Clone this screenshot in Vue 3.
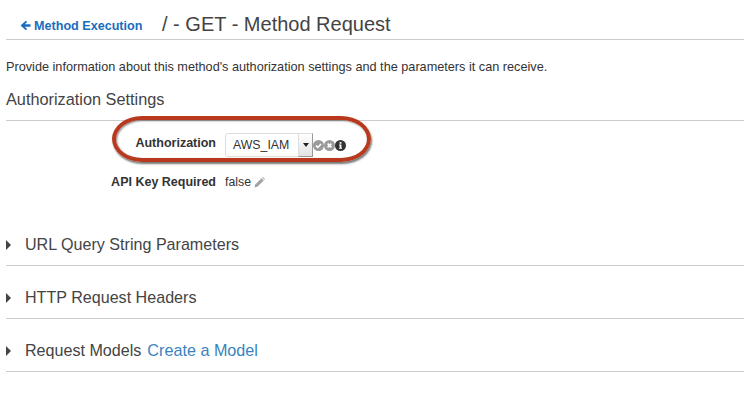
<template>
  <div class="page">
    <header class="head">
      <a class="back">
        <svg class="back-icon" viewBox="0 0 12 12" width="11" height="11">
          <path d="M6.4.8 7.8 2.2 5.2 4.6H11.5V7.4H5.2L7.8 9.8 6.4 11.2.6 6z" fill="#1a6dbd" />
        </svg>
        Method Execution
      </a>
      <h1>/ - GET - Method Request</h1>
    </header>

    <p class="intro">Provide information about this method's authorization settings and the parameters it can receive.</p>

    <h2 class="section-title">Authorization Settings</h2>

    <div class="settings">
      <div class="row auth-row">
        <span class="label auth-label">Authorization</span>
        <div class="select">
          <span class="select-value">AWS_IAM</span>
          <span class="select-arrow"></span>
        </div>
        <div class="actions">
          <svg viewBox="0 0 11 11" width="11" height="11">
            <circle cx="5.5" cy="5.5" r="5.5" fill="#9a9a9a" />
            <path d="M3 5.6 4.8 7.4 8 3.9" fill="none" stroke="#fff" stroke-width="1.5" />
          </svg>
          <svg viewBox="0 0 11 11" width="11" height="11">
            <circle cx="5.5" cy="5.5" r="5.5" fill="#9a9a9a" />
            <path d="M3.6 3.6 7.4 7.4M7.4 3.6 3.6 7.4" fill="none" stroke="#fff" stroke-width="1.6" />
          </svg>
          <svg viewBox="0 0 11 11" width="11" height="11">
            <circle cx="5.5" cy="5.5" r="5.5" fill="#333" />
            <path d="M4.6 2h1.8v1.7H4.6zM4 4.6h2.4v3.2H7v1H4v-1h.7V5.6H4z" fill="#fff" />
          </svg>
        </div>
        <div class="highlight"></div>
      </div>
      <div class="row key-row">
        <span class="label">API Key Required</span>
        <span class="value">false</span>
        <svg class="pencil" viewBox="0 0 11 11" width="11" height="11">
          <path d="M0.5 10.5 1.2 7.6 7.6 1.2 9.8 3.4 3.4 9.8z" fill="#a3a3a3" />
          <path d="M8.2 0.6 9 0 11 2 10.4 2.8z" fill="#a3a3a3" />
        </svg>
      </div>
    </div>

    <section v-for="item in sections" :key="item.title" class="section">
      <span class="caret"></span>
      <span class="section-name">{{ item.title }}</span>
      <a v-if="item.link" class="link">{{ item.link }}</a>
    </section>
  </div>
</template>

<script setup>
const sections = [
  { title: "URL Query String Parameters" },
  { title: "HTTP Request Headers" },
  { title: "Request Models", link: "Create a Model" },
];
</script>

<style scoped>
.page {
  width: 744px;
  height: 402px;
  overflow: hidden;
  padding-left: 6px;
  box-sizing: border-box;
  background: #fff;
  font-family: "Liberation Sans", Arial, sans-serif;
  color: #444;
}

.head {
  display: flex;
  align-items: baseline;
  height: 40px;
  padding: 13px 0 0 14px;
  box-sizing: border-box;
  border-bottom: 1px solid #ccc;
}

.back {
  display: flex;
  align-items: center;
  gap: 3px;
  width: 142px;
  font-size: 12.6px;
  font-weight: 700;
  color: #1a6dbd;
}

.back-icon {
  flex: none;
}

h1 {
  margin: 0;
  font-size: 20px;
  font-weight: 400;
  line-height: 22px;
  color: #444;
}

.intro {
  margin: 20px 0 0;
  font-size: 12.7px;
  line-height: 14px;
  color: #333;
}

.section-title {
  margin: 16px 0 0;
  height: 30px;
  font-size: 16.3px;
  font-weight: 400;
  line-height: 19px;
  border-bottom: 1px solid #ccc;
  color: #444;
}

.settings {
  padding-top: 12px;
  height: 92px;
  box-sizing: border-box;
}

.row {
  display: flex;
  align-items: center;
  position: relative;
}

.label {
  width: 210px;
  margin-right: 9px;
  text-align: right;
  font-size: 12.5px;
  font-weight: 700;
  color: #333;
}

.auth-row {
  height: 24px;
}

.auth-label {
  margin-top: -4px;
}

.select {
  display: flex;
  justify-content: space-between;
  width: 88px;
  height: 24px;
  box-sizing: border-box;
  border: 1px solid #ddd;
  border-radius: 3px;
  font-size: 12.3px;
  line-height: 22px;
  color: #333;
}

.select-value {
  padding-left: 7px;
}

.select-arrow {
  width: 15px;
  margin: -1px -1px -1px 0;
  background: linear-gradient(#fff, #e2e2e2);
  border: 1px solid #999;
  border-top-color: #ddd;
  border-left-color: #ddd;
  box-sizing: border-box;
  position: relative;
}

.select-arrow::after {
  content: "";
  position: absolute;
  left: 4px;
  top: 9px;
  border-left: 3px solid transparent;
  border-right: 3px solid transparent;
  border-top: 4px solid #222;
}

.actions {
  display: flex;
  align-items: center;
}

.highlight {
  position: absolute;
  left: 106px;
  top: -17px;
  width: 259px;
  height: 46px;
  box-sizing: border-box;
  border: 4px solid #b8391d;
  border-radius: 30px / 23px;
  box-shadow: 1px 2px 2px rgba(60, 60, 60, 0.7), inset 1px 1px 2px rgba(60, 60, 60, 0.6);
  pointer-events: none;
}

.key-row {
  margin-top: 17px;
  height: 16px;
}

.value {
  font-size: 12.3px;
  color: #333;
}

.pencil {
  margin-left: 3px;
}

.section {
  display: flex;
  align-items: center;
  height: 53px;
  box-sizing: border-box;
  padding-top: 11px;
  border-bottom: 1px solid #ccc;
  font-size: 16.1px;
}

.caret {
  width: 0;
  height: 0;
  margin-right: 14px;
  border-top: 5px solid transparent;
  border-bottom: 5px solid transparent;
  border-left: 5px solid #444;
}

.link {
  margin-left: 6px;
  font-size: 16.2px;
  color: #3b83c0;
}
</style>
